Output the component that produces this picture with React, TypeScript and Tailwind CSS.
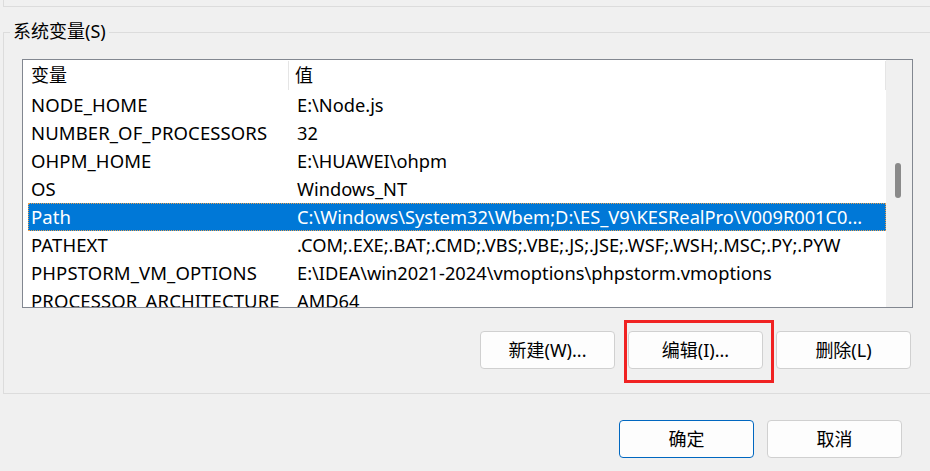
import React from "react";

const rows: [string, string][] = [
  ["NODE_HOME", "E:\\Node.js"],
  ["NUMBER_OF_PROCESSORS", "32"],
  ["OHPM_HOME", "E:\\HUAWEI\\ohpm"],
  ["OS", "Windows_NT"],
  ["Path", "C:\\Windows\\System32\\Wbem;D:\\ES_V9\\KESRealPro\\V009R001C0..."],
  ["PATHEXT", ".COM;.EXE;.BAT;.CMD;.VBS;.VBE;.JS;.JSE;.WSF;.WSH;.MSC;.PY;.PYW"],
  ["PHPSTORM_VM_OPTIONS", "E:\\IDEA\\win2021-2024\\vmoptions\\phpstorm.vmoptions"],
  ["PROCESSOR_ARCHITECTURE", "AMD64"],
];

function Btn({ label, primary }: { label: string; primary?: boolean }) {
  return (
    <div
      className={
        "w-[135px] h-[38px] rounded-[4px] bg-[#fdfdfd] flex items-center justify-center text-[18px] text-black border " +
        (primary ? "border-[#0067c0]" : "border-[#d0d0d0]")
      }
    >
      {label}
    </div>
  );
}

export default function App() {
  return (
    <div
      className="w-[930px] h-[471px] bg-[#f0f0f0] overflow-hidden text-black"
      style={{ fontFamily: "'Noto Sans', 'Noto Sans CJK SC', sans-serif" }}
    >
      <div className="ml-[3px] h-[7px] border-l border-b border-[#dcdcdc]" />
      <div className="relative ml-[3px] mt-[25px] h-[362px] border-l border-t border-b border-[#dcdcdc]">
        <div className="absolute left-[6px] top-[-14px] px-[3px] bg-[#f0f0f0] text-[18px] leading-[24px]">
          系统变量(S)
        </div>
        <div className="ml-[18px] mt-[26px] w-[891px] h-[249px] border border-[#828790] bg-white flex overflow-hidden">
          <div className="flex-1 flex flex-col overflow-hidden">
            <div className="h-[31px] shrink-0 flex text-[18px]">
              <div className="w-[266px] pl-[8px] flex items-center border-r border-[#e5e5e5] my-[1px]">变量</div>
              <div className="flex-1 pl-[6px] flex items-center border-r border-[#e5e5e5] my-[1px]">值</div>
            </div>
            {rows.map(([k, v]) => {
              const sel = k === "Path";
              return (
                <div
                  key={k}
                  className={
                    "h-[28px] shrink-0 flex items-center whitespace-nowrap ml-[5px] " +
                    (sel ? "bg-[#0078d7] text-white outline outline-1 outline-dotted outline-[#e8a050] -outline-offset-1" : "")
                  }
                >
                  <div className="w-[261px] pl-[3px] overflow-hidden text-[18.5px] tracking-[0.1px]">{k}</div>
                  <div className="flex-1 pl-[8px] overflow-hidden text-[18.25px]">{v}</div>
                </div>
              );
            })}
          </div>
          <div className="w-[26px] shrink-0 bg-[#f0f0f0] relative">
            <div className="absolute left-[9px] top-[103px] w-[6px] h-[35px] rounded-full bg-[#8a8a8a]" />
          </div>
        </div>
        <div className="mt-[23px] flex gap-[13px] pl-[476px]">
          <Btn label="新建(W)..." />
          <div className="relative">
            <Btn label="编辑(I)..." />
            <div className="absolute left-[-4px] top-[-11px] w-[150px] h-[63px] border-[3px] border-[#f02222]" />
          </div>
          <Btn label="删除(L)" />
        </div>
      </div>
      <div className="mt-[26px] flex gap-[13px] pl-[619px]">
        <Btn label="确定" primary />
        <Btn label="取消" />
      </div>
    </div>
  );
}
